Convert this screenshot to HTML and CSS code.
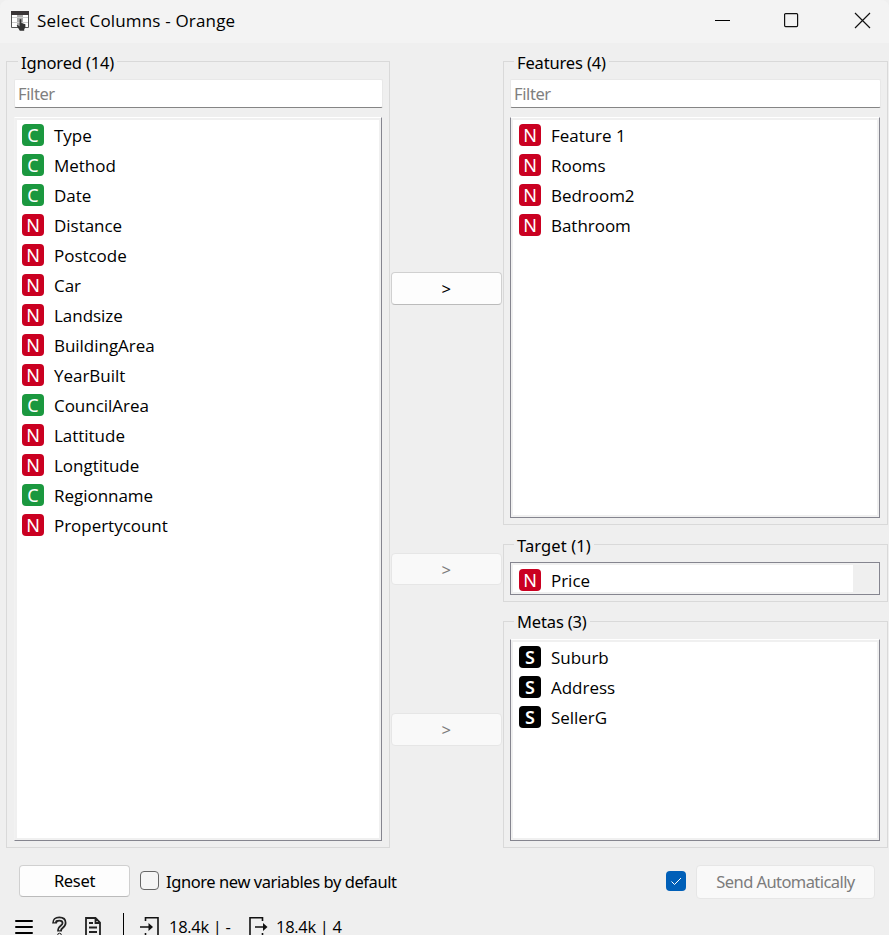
FILE: index.html
```html
<!DOCTYPE html>
<html lang="en">
<head>
<meta charset="utf-8">
<title>Select Columns - Orange</title>
<link rel="stylesheet" href="styles.css">
</head>
<body>
<div class="window">
  <header class="titlebar">
    <svg class="app-icon" width="19" height="20" viewBox="0 0 19 20">
      <path fill="#fff" stroke="#555" d="M.5.5h17v16H.5z"/>
      <path fill="#aaa" d="M6 3h6v13H6z"/>
      <path stroke="#ccc" d="M1 6.500h16M1 11.500h16"/>
      <path fill="#3a3537" d="M0 0h18v4H0z"/>
      <path fill="#333" d="M8.600 8.500q1-.8 1.800 0v3.500l4 1.200v3l-1.200 2v1.500H8.800L5.700 14.500q.8-1.200 2 .2l.9.700z"/>
    </svg>
    <h1 class="title">Select Columns - Orange</h1>
    <svg class="controls" width="160" height="18" viewBox="0 0 160 18" fill="none" stroke="#111" stroke-width="1.200">
      <path stroke-width="1" stroke="#000" d="M2 9.500h15"/>
      <rect x="71.600" y="2.600" width="13" height="13" rx="1"/>
      <path d="M142 2l15 15M157 2l-15 15"/>
    </svg>
  </header>
  <main class="panels">
    <section class="group ignored">
      <h2 class="legend">Ignored (14)</h2>
      <input class="filter" placeholder="Filter">
      <ul class="list">
        <li><b class="tag c">C</b>Type</li>
        <li><b class="tag c">C</b>Method</li>
        <li><b class="tag c">C</b>Date</li>
        <li><b class="tag n">N</b>Distance</li>
        <li><b class="tag n">N</b>Postcode</li>
        <li><b class="tag n">N</b>Car</li>
        <li><b class="tag n">N</b>Landsize</li>
        <li><b class="tag n">N</b>BuildingArea</li>
        <li><b class="tag n">N</b>YearBuilt</li>
        <li><b class="tag c">C</b>CouncilArea</li>
        <li><b class="tag n">N</b>Lattitude</li>
        <li><b class="tag n">N</b>Longtitude</li>
        <li><b class="tag c">C</b>Regionname</li>
        <li><b class="tag n">N</b>Propertycount</li>
      </ul>
    </section>
    <div class="movers">
      <button class="btn move-feature">&gt;</button>
      <button class="btn move-target" disabled>&gt;</button>
      <button class="btn move-meta" disabled>&gt;</button>
    </div>
    <div class="used">
      <section class="group features">
        <h2 class="legend">Features (4)</h2>
        <input class="filter" placeholder="Filter">
        <ul class="list">
          <li><b class="tag n">N</b>Feature 1</li>
          <li><b class="tag n">N</b>Rooms</li>
          <li><b class="tag n">N</b>Bedroom2</li>
          <li><b class="tag n">N</b>Bathroom</li>
        </ul>
      </section>
      <section class="group target">
        <h2 class="legend">Target (1)</h2>
        <ul class="list single">
          <li><b class="tag n">N</b>Price</li>
        </ul>
      </section>
      <section class="group metas">
        <h2 class="legend">Metas (3)</h2>
        <ul class="list">
          <li><b class="tag s">S</b>Suburb</li>
          <li><b class="tag s">S</b>Address</li>
          <li><b class="tag s">S</b>SellerG</li>
        </ul>
      </section>
    </div>
  </main>
  <div class="actions">
    <button class="btn reset">Reset</button>
    <span class="check"></span>
    <span class="check-label">Ignore new variables by default</span>
    <span class="check on"><svg width="20" height="20" viewBox="0 0 20 20" fill="none" stroke="#fff" stroke-width="1"><path d="M5.500 10.500l3 3L15 7"/></svg></span>
    <button class="btn send" disabled>Send Automatically</button>
  </div>
  <footer class="status">
    <svg class="menu" width="18" height="22" viewBox="0 0 18 22"><path stroke="#000" stroke-width="2" stroke-linecap="round" d="M1 5h16M1 11h16M1 17h16"/></svg>
    <svg class="help" width="15" height="22" viewBox="0 0 15 22" fill="none"><path stroke="#222" stroke-width="4.800" d="M2.500 7.500Q2.500 3 7.300 3T12.100 7Q12.100 9 9.500 11Q7.500 12.300 7.500 15.500"/><path stroke="#efefef" stroke-width="1.300" d="M2.500 6.200Q2.500 3 7.300 3T12.100 7Q12.100 9 9.500 11Q7.500 12.300 7.500 14.300"/><circle cx="7.500" cy="19" r="1.800" stroke="#222"/></svg>
    <svg class="report" width="16" height="22" viewBox="0 0 16 22" fill="none" stroke="#222" stroke-width="1.800"><path d="M1 22V2h9.500L15 6.500V22M10.500 2v5H15M4 7h4M4 11.500h8M4 16h8"/></svg>
    <i class="divider"></i>
    <svg class="input" width="20" height="22" viewBox="0 0 20 22" fill="none" stroke="#111" stroke-width="1.600"><path d="M5.500 5V1.800H18V20H5.500v-3M0 11h10"/><path fill="#111" stroke="none" d="M8.500 7l4.500 4-4.500 4z"/></svg>
    <span class="count in-count">18.4k | -</span>
    <svg class="output" width="19" height="22" viewBox="0 0 19 22" fill="none" stroke="#111" stroke-width="1.600"><path d="M13.500 5V1.800H1V20h12.500v-3M6 11h10"/><path fill="#111" stroke="none" d="M14 7l4.500 4-4.500 4z"/></svg>
    <span class="count out-count">18.4k | 4</span>
  </footer>
</div>
</body>
</html>
```
FILE: styles.css
```css
* { box-sizing: border-box; margin: 0; padding: 0; }
html, body { height: 935px; overflow: hidden; }
body { background: #efefef; color: #000; font: 16.5px/22px "Noto Sans", sans-serif; }
svg { display: block; flex: none; }

.window { height: 935px; display: flex; flex-direction: column; overflow: hidden; border-radius: 8px 8px 0 0; }
.titlebar { height: 43px; flex: none; display: flex; align-items: center; padding: 0 16px 2px 11px; background: #f3f3f3; }
.title { margin-left: 7px; font: 17px/22px "Open Sans", sans-serif; letter-spacing: .17px; white-space: nowrap; }
.controls { margin: -2px 0 0 auto; }

.panels { display: flex; flex: none; height: 787px; margin-top: 18px; padding-left: 6px; }
.group { display: flex; flex-direction: column; border: 1px solid #d9d9d9; padding: 0 7px 6px 6px; }
.ignored { width: 384px; padding-left: 7px; }
.legend { align-self: flex-start; height: 22px; margin: -10px 0 5px 4px; padding: 0 3px; background: #efefef; font-size: 16.5px; font-weight: 400; line-height: 22px; letter-spacing: -.15px; white-space: nowrap; }
.metas .legend { line-height: 20px; }
.target .legend { letter-spacing: .1px; }
.filter { flex: none; width: calc(100% + 1px); height: 29px; margin-bottom: 9px; padding: 0 3px; border: 1px solid #e8e8e8; border-bottom-color: #858585; border-radius: 2px; background: #fff; font: 16.5px "Noto Sans", sans-serif; letter-spacing: -.4px; outline: 0; }
.filter::placeholder { color: #808080; opacity: 1; }
.list { flex: 1; min-height: 0; list-style: none; padding: 2px 0 0 6px; border: 1px solid #85858f; border-top-color: #fff; background: #fff; box-shadow: inset 0 0 0 2px #f0f0f0; font: 17px/28px "Open Sans", sans-serif; letter-spacing: -.03px; }
.ignored .list { border-left-color: #f2f2f2; padding-left: 7px; }
.list li { display: flex; align-items: center; height: 30px; padding-top: 2px; }
.tag { flex: none; width: 22px; height: 22px; margin: -2px 10px 0 0; border-radius: 4px; color: #fff; font: 400 18px/22px "Noto Sans", sans-serif; text-align: center; }
.used .tag { margin-left: 2px; }
.c { background: #1b983f; }
.n { background: #ca0021; }
.s { background: #000; font-weight: 600; }

.movers { width: 113px; flex: none; display: flex; flex-direction: column; padding: 211px 1px 0; }
.btn { border: 1px solid #d0d0d0; border-bottom-color: #bbb; border-radius: 4px; background: #fdfdfd; color: #000; font: 16.5px "Noto Sans", sans-serif; letter-spacing: -.3px; white-space: nowrap; }
.btn:disabled { border-color: #e6e6e6; background: #f9f9f9; color: #7c7c7c; }
.movers .btn { height: 33px; flex: none; padding-right: 1px; }
.movers .move-target { height: 32px; margin-top: 248px; }
.movers .move-meta { margin-top: 128px; }

.used { width: 385px; display: flex; flex-direction: column; }
.features { height: 464px; }
.target { height: 58px; margin-top: 19px; }
.metas { height: 227px; margin-top: 19px; }
.single { padding-top: 2px; border-top-color: #85858f; background: linear-gradient(#efefef, #efefef) right / 26px 100% no-repeat, #fff; }

.actions { display: flex; flex: none; height: 34px; margin-top: 17px; padding: 0 14px 0 19px; }
.reset { width: 111px; height: 32px; padding-bottom: 2px; }
.check { width: 19px; height: 19px; margin: 6px 0 0 10px; border: 1px solid #666; border-radius: 4px; background: #f5f5f5; }
.check.on { width: 20px; height: 20px; margin-left: auto; border: 0; background: #005fb8; }
.check-label { margin: 6px 0 0 7px; letter-spacing: -.42px; white-space: nowrap; }
.send { width: 179px; height: 34px; margin-left: 10px; padding-bottom: 2px; }
.send.btn { letter-spacing: -.57px; }

.status { display: flex; flex: none; height: 28px; margin-top: 14px; padding: 3px 0 0 15px; font: 16.5px/22px "Open Sans", sans-serif; }
.help { margin-left: 19px; }
.report { margin-left: 18px; }
.divider { width: 1px; margin: -3px 0 0 22px; background: #000; }
.input { margin-left: 16px; }
.count { white-space: nowrap; letter-spacing: -.3px; }
.in-count { width: 72px; margin-left: 9px; }
.output { margin-left: 8px; }
.out-count { margin-left: 8px; }
```
